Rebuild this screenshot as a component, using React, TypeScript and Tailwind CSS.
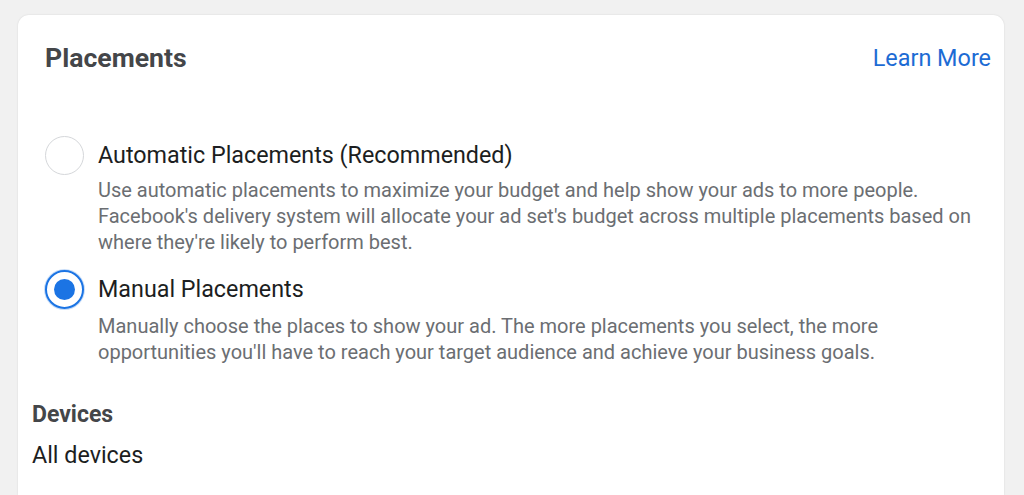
import React from "react";

function Radio({ checked }: { checked: boolean }) {
  if (checked) {
    return (
      <div className="w-[39px] h-[39px] rounded-full border-[2px] border-[#1b74e4] shadow-[0_0_0_1px_rgba(27,116,228,0.25)] flex items-center justify-center bg-white">
        <div className="w-[21px] h-[21px] rounded-full bg-[#1b74e4]" />
      </div>
    );
  }
  return <div className="w-[39px] h-[39px] rounded-full border-[1.5px] border-[#d5d7da] bg-white" />;
}

function Option({
  checked,
  title,
  lines,
  descGap,
}: {
  checked: boolean;
  title: string;
  lines: string[];
  descGap: string;
}) {
  return (
    <div className="flex">
      <div className="w-[53px] shrink-0">
        <Radio checked={checked} />
      </div>
      <div>
        <div className="text-[23.3px] leading-[39px] text-[#1c1e21]">{title}</div>
        <div className={`${descGap} text-[20px] leading-[26px] text-[#6b6e72]`}>
          {lines.map((l, i) => (
            <div key={i} className="whitespace-nowrap">{l}</div>
          ))}
        </div>
      </div>
    </div>
  );
}

export default function App() {
  return (
    <div
      className="min-h-[495px] h-[495px] overflow-hidden bg-[#f1f1f1] pt-[15px] pl-[18px] pr-[20px]"
      style={{ fontFamily: "Roboto, 'Liberation Sans', sans-serif" }}
    >
      <div className="h-[480px] bg-white rounded-t-[11px] shadow-[0_0_2px_rgba(0,0,0,0.12)] pt-[27px] pl-[14px] pr-[13px]">
        <div className="pl-[13px]">
          <div className="flex items-start justify-between">
            <div className="text-[26.6px] leading-[32px] font-bold text-[#444649]">Placements</div>
            <div className="text-[23.4px] leading-[32px] text-[#1d6bd4]">Learn More</div>
          </div>
          <div className="mt-[62px]">
            <Option
              checked={false}
              descGap="mt-[2px]"
              title="Automatic Placements (Recommended)"
              lines={[
                "Use automatic placements to maximize your budget and help show your ads to more people.",
                "Facebook's delivery system will allocate your ad set's budget across multiple placements based on",
                "where they're likely to perform best.",
              ]}
            />
            <div className="mt-[15px]">
              <Option
                checked={true}
                descGap="mt-[4px]"
                title="Manual Placements"
                lines={[
                  "Manually choose the places to show your ad. The more placements you select, the more",
                  "opportunities you'll have to reach your target audience and achieve your business goals.",
                ]}
              />
            </div>
          </div>
        </div>
        <div className="mt-[36px] text-[23px] leading-[28px] font-bold text-[#444649]">Devices</div>
        <div className="mt-[12px] text-[23.3px] leading-[28px] text-[#1c1e21]">All devices</div>
      </div>
    </div>
  );
}
